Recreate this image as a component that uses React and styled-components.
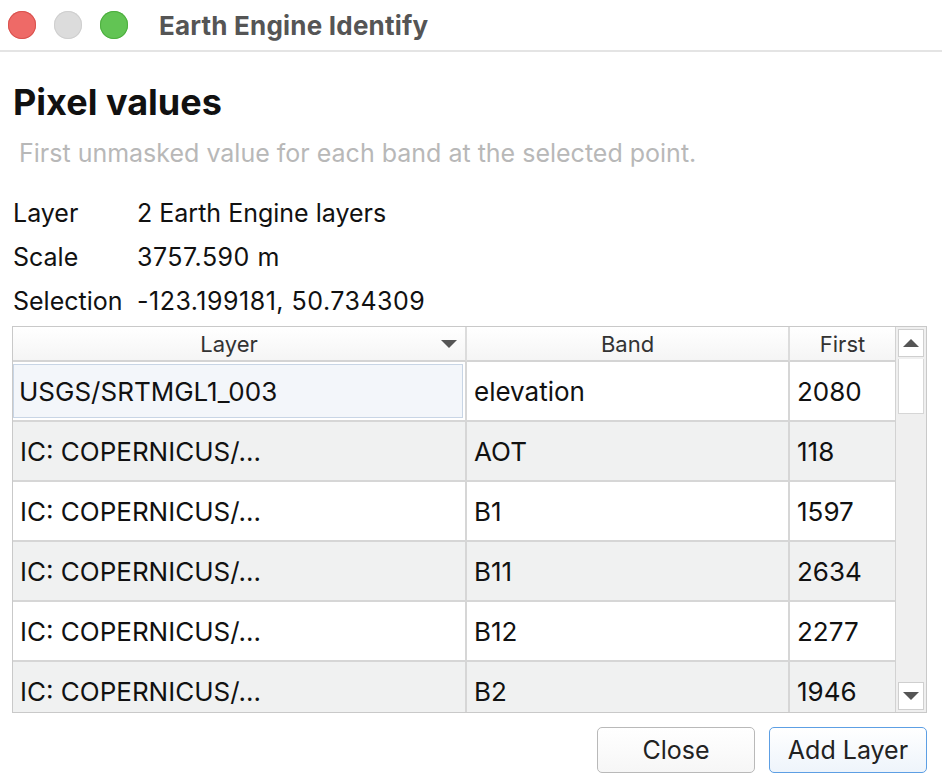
import React from "react";
import styled, { createGlobalStyle } from "styled-components";

const GlobalStyle = createGlobalStyle`
  html, body {
    margin: 0;
    padding: 0;
    background: #ffffff;
  }
  body {
    font-family: Inter, "Liberation Sans", Arial, sans-serif;
    color: #111;
  }
`;

const Window = styled.div`
  width: 942px;
  height: 782px;
  display: flex;
  flex-direction: column;
  overflow: hidden;
  background: #fff;
`;

const TitleBar = styled.div`
  height: 52px;
  display: flex;
  align-items: center;
  padding-left: 8px;
  border-bottom: 2px solid #e4e4e4;
  box-sizing: border-box;
`;

const Lights = styled.div`
  display: flex;
  gap: 18px;
  margin-right: 31px;
`;

const Light = styled.span`
  width: 28px;
  height: 28px;
  border-radius: 50%;
  background: ${(p) => p.$color};
  box-shadow: inset 0 0 0 1px ${(p) => p.$edge};
`;

const WindowTitle = styled.div`
  font-size: 26px;
  font-weight: 700;
  color: #555;
  letter-spacing: 0.2px;
`;

const Content = styled.div`
  flex: 1;
  display: flex;
  flex-direction: column;
  padding: 0 15px 0 12px;
`;

const Heading = styled.h1`
  margin: 28px 0 0 1px;
  font-size: 36px;
  line-height: 44px;
  font-weight: 700;
`;

const Subtitle = styled.p`
  margin: 14px 0 0 7px;
  font-size: 25px;
  line-height: 30px;
  color: #b8b8b8;
`;

const InfoGrid = styled.dl`
  display: grid;
  grid-template-columns: 124px 1fr;
  grid-auto-rows: 44px;
  align-items: center;
  margin: 23px 0 0 1px;
  font-size: 25px;
`;

const Term = styled.dt`
  margin: 0;
`;

const Value = styled.dd`
  margin: 0;
  letter-spacing: ${(p) => (p.$numeric ? "0.5px" : "0")};
`;

const TableFrame = styled.div`
  margin-top: 3px;
  height: 385px;
  border: 1px solid #c9c9c9;
  display: flex;
  overflow: hidden;
  flex-shrink: 0;
`;

const Grid = styled.div`
  flex: 1;
  display: grid;
  grid-template-columns: 454px 323px 1fr;
  grid-template-rows: 35px;
  grid-auto-rows: 60px;
  align-content: start;
`;

const HeaderCell = styled.div`
  position: relative;
  display: flex;
  align-items: center;
  justify-content: center;
  padding-right: ${(p) => (p.$sorted ? "20px" : "0")};
  font-size: 22px;
  color: #333;
  background: linear-gradient(#ffffff, #f5f5f5);
  border-bottom: 2px solid #d4d4d4;
  border-right: ${(p) => (p.$last ? "none" : "2px solid #dcdcdc")};
  box-sizing: border-box;
`;

const SortArrow = styled.span`
  position: absolute;
  right: 8px;
  top: 13px;
  width: 0;
  height: 0;
  border-left: 8px solid transparent;
  border-right: 8px solid transparent;
  border-top: 8px solid #555;
`;

const Cell = styled.div`
  display: flex;
  align-items: center;
  padding-left: ${(p) => (p.$selected ? "5px" : "7px")};
  font-size: 26px;
  color: #111;
  background: ${(p) => (p.$alt ? "#f0f1f1" : "#fff")};
  border-bottom: 2px solid #d6d6d6;
  border-right: ${(p) => (p.$last ? "none" : "2px solid #d6d6d6")};
  box-sizing: border-box;
  white-space: nowrap;
  overflow: hidden;
`;

const SelectedBox = styled.div`
  flex: 1;
  align-self: stretch;
  margin: 2px 2px 2px -5px;
  padding-left: 5px;
  display: flex;
  align-items: center;
  background: #f3f6fa;
  border: 1px solid #c8d5e5;
`;

const Scrollbar = styled.div`
  width: 30px;
  display: flex;
  flex-direction: column;
  background: #efefef;
  border-left: 1px solid #d2d2d2;
`;

const ScrollButton = styled.div`
  height: 28px;
  margin: 2px;
  display: flex;
  align-items: center;
  justify-content: center;
  background: #fff;
  border: 1px solid #cfcfcf;
  box-sizing: border-box;
  margin-top: ${(p) => (p.$down ? "auto" : "2px")};
`;

const Arrow = styled.span`
  width: 0;
  height: 0;
  border-left: 8px solid transparent;
  border-right: 8px solid transparent;
  ${(p) =>
    p.$down ? "border-top: 8px solid #555;" : "border-bottom: 8px solid #555;"}
`;

const Thumb = styled.div`
  height: 54px;
  margin: 0 2px;
  background: #fff;
  border: 1px solid #d6d6d6;
  border-top: none;
`;

const Footer = styled.div`
  display: flex;
  justify-content: flex-end;
  gap: 14px;
  margin-top: 14px;
`;

const Button = styled.button`
  width: 158px;
  height: 46px;
  padding: 0;
  font-family: inherit;
  font-size: 25px;
  color: #222;
  border-radius: 5px;
  border: 1px solid ${(p) => (p.$primary ? "#5d9fe4" : "#b9b9b9")};
  background: ${(p) =>
    p.$primary
      ? "linear-gradient(#ffffff, #eef4fb)"
      : "linear-gradient(#ffffff, #f6f6f6)"};
`;

const rows = [
  { layer: "USGS/SRTMGL1_003", band: "elevation", first: "2080" },
  { layer: "IC: COPERNICUS/...", band: "AOT", first: "118" },
  { layer: "IC: COPERNICUS/...", band: "B1", first: "1597" },
  { layer: "IC: COPERNICUS/...", band: "B11", first: "2634" },
  { layer: "IC: COPERNICUS/...", band: "B12", first: "2277" },
  { layer: "IC: COPERNICUS/...", band: "B2", first: "1946" },
];

export default function App() {
  return (
    <Window>
      <GlobalStyle />
      <TitleBar>
        <Lights>
          <Light $color="#ee6a67" $edge="#d9534f" />
          <Light $color="#dcdcdc" $edge="#cfcfcf" />
          <Light $color="#62c454" $edge="#4daf3f" />
        </Lights>
        <WindowTitle>Earth Engine Identify</WindowTitle>
      </TitleBar>

      <Content>
        <Heading>Pixel values</Heading>
        <Subtitle>First unmasked value for each band at the selected point.</Subtitle>

        <InfoGrid>
          <Term>Layer</Term>
          <Value>2 Earth Engine layers</Value>
          <Term>Scale</Term>
          <Value $numeric>3757.590 m</Value>
          <Term>Selection</Term>
          <Value $numeric>-123.199181, 50.734309</Value>
        </InfoGrid>

        <TableFrame>
          <Grid>
            <HeaderCell $sorted>
              Layer
              <SortArrow />
            </HeaderCell>
            <HeaderCell>Band</HeaderCell>
            <HeaderCell $last>First</HeaderCell>
            {rows.map((r, i) => (
              <React.Fragment key={i}>
                <Cell $alt={i % 2 === 1} $selected={i === 0}>
                  {i === 0 ? <SelectedBox>{r.layer}</SelectedBox> : r.layer}
                </Cell>
                <Cell $alt={i % 2 === 1}>{r.band}</Cell>
                <Cell $alt={i % 2 === 1} $last>
                  {r.first}
                </Cell>
              </React.Fragment>
            ))}
          </Grid>
          <Scrollbar>
            <ScrollButton>
              <Arrow />
            </ScrollButton>
            <Thumb />
            <ScrollButton $down>
              <Arrow $down />
            </ScrollButton>
          </Scrollbar>
        </TableFrame>

        <Footer>
          <Button>Close</Button>
          <Button $primary>Add Layer</Button>
        </Footer>
      </Content>
    </Window>
  );
}
